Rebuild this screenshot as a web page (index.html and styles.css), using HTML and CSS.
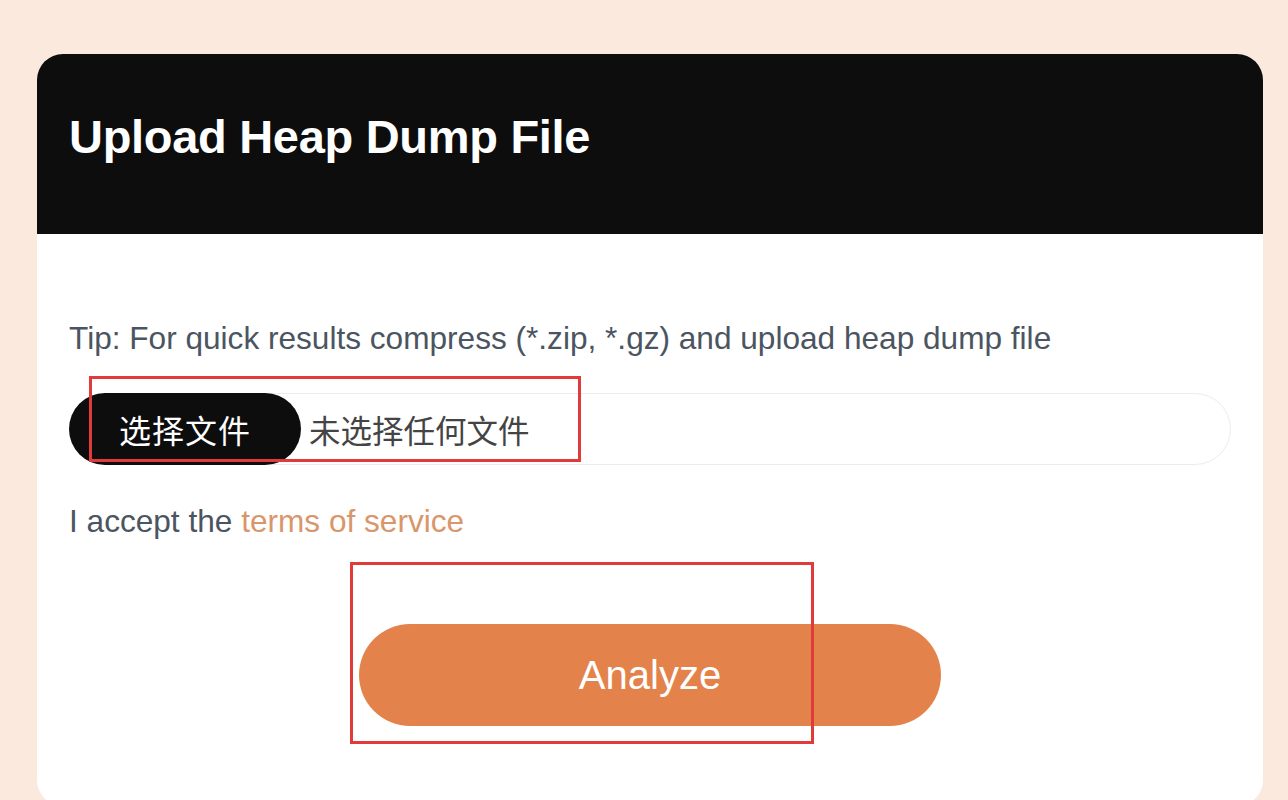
FILE: index.html
```html
<!DOCTYPE html>
<html>
<head>
<meta charset="utf-8">
<title>Upload Heap Dump File</title>
<link rel="stylesheet" href="styles.css">
</head>
<body>
<div class="card">
  <div class="card-header">
    <h1>Upload Heap Dump File</h1>
  </div>
  <div class="card-body">
    <p class="tip">Tip: For quick results compress (*.zip, *.gz) and upload heap dump file</p>

    <div class="file-input">
      <span class="file-btn">选择文件</span>
      <span class="file-name">未选择任何文件</span>
      <span class="mark mark-file"></span>
    </div>

    <p class="terms">I accept the <a href="#">terms of service</a></p>

    <div class="actions">
      <button class="analyze">Analyze</button>
      <span class="mark mark-btn"></span>
    </div>
  </div>
</div>
</body>
</html>
```

FILE: styles.css
```css
body {
   margin: 0;
   padding: 54px 0 0 37px;
   background-color: #fbe9de;
   font-family: "Liberation Sans", Arial, "Noto Sans CJK SC", sans-serif;
   overflow: hidden;
}

.card {
   width: 1226px;
   height: 752px;
   background: #fff;
   border-radius: 26px;
   overflow: hidden;
}

.card-header {
   height: 180px;
   background: #0d0d0d;
   display: flex;
   align-items: center;
   padding: 0 32px 16px;
   box-sizing: border-box;
}

.card-header h1 {
   margin: 0;
   color: #fff;
   font-size: 47px;
   font-weight: bold;
   letter-spacing: -0.3px;
}

.card-body {
   padding: 86px 32px 0;
}

.tip {
   margin: 0;
   font-size: 31.6px;
   color: #4b5561;
}

.file-input {
   position: relative;
   margin-top: 36px;
   height: 72px;
   border: 1px solid #ececec;
   border-radius: 36px;
   display: flex;
   align-items: center;
   box-sizing: border-box;
}

.file-btn {
   height: 72px;
   width: 232px;
   margin: -1px 0 0 -1px;
   background: #0d0d0d;
   color: #fff;
   border-radius: 36px;
   display: flex;
   align-items: center;
   justify-content: center;
   font-size: 32px;
   letter-spacing: 1px;
   font-family: "Noto Sans CJK SC", sans-serif;
}

.file-name {
   margin-left: 8px;
   font-size: 31.5px;
   color: #444;
   font-family: "Noto Sans CJK SC", sans-serif;
}

.terms {
   margin: 38px 0 0;
   font-size: 31.6px;
   color: #4b5561;
}

.terms a {
   color: #d9966a;
   text-decoration: none;
}

.actions {
   position: relative;
   display: flex;
   justify-content: center;
   margin-top: 84px;
}

.analyze {
   width: 582px;
   height: 102px;
   border: none;
   border-radius: 51px;
   background: #e3834b;
   color: #fff;
   font-family: "Liberation Sans", Arial, sans-serif;
   font-size: 40px;
}

/* red annotation boxes */
.mark {
   position: absolute;
   border: 3px solid #e03a3a;
   pointer-events: none;
}

.mark-file {
   left: 19px;
   top: -18px;
   width: 486px;
   height: 80px;
}

.mark-btn {
   left: 281px;
   top: -62px;
   width: 458px;
   height: 176px;
}
```
